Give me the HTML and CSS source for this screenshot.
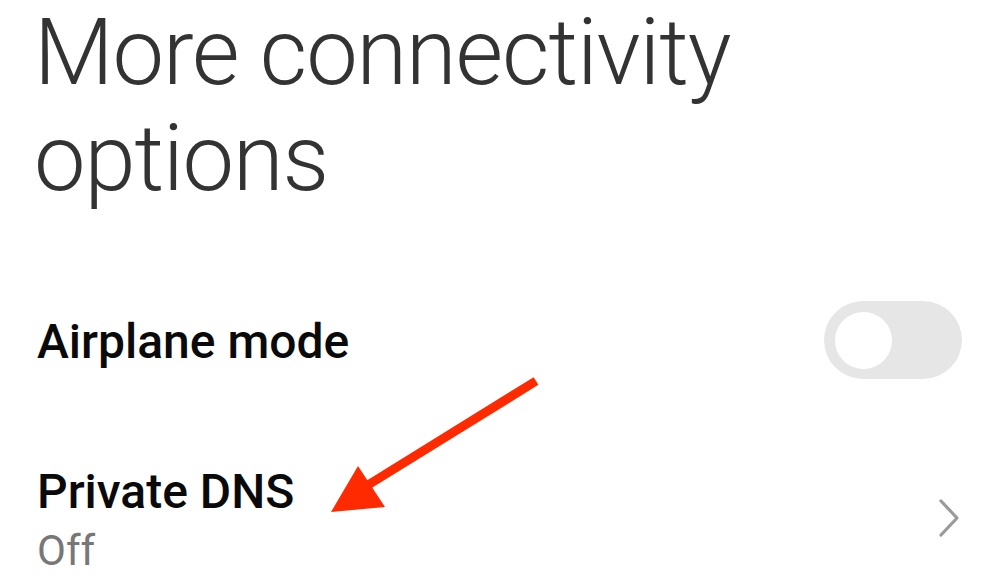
FILE: index.html
```html
<!DOCTYPE html>
<html>
<head>
<meta charset="utf-8">
<link rel="stylesheet" href="styles.css">
</head>
<body>
<div class="page">
  <h1 class="title">More connectivity<br>options</h1>
  <div class="row row-airplane">
    <div class="label">Airplane mode</div>
    <div class="toggle"><div class="knob"></div></div>
  </div>
  <div class="row row-dns">
    <div class="texts">
      <div class="label">Private DNS</div>
      <div class="sub">Off</div>
    </div>
    <svg class="chevron" width="24" height="40" viewBox="0 0 24 40">
      <path d="M4 3 L20 20 L4 37" fill="none" stroke="#9a9a9a" stroke-width="3.2" stroke-linecap="round" stroke-linejoin="round"/>
    </svg>
  </div>
  <svg class="arrow" width="1005" height="588" viewBox="0 0 1005 588">
    <line x1="536" y1="381" x2="368" y2="485" stroke="#ff2a00" stroke-width="9"/>
    <polygon points="358,466 385,507 331,512" fill="#ff2a00"/>
  </svg>
</div>
</body>
</html>
```
FILE: styles.css
```css
html, body {
  margin: 0;
  padding: 0;
  background: #ffffff;
}
.page {
  position: relative;
  width: 1005px;
  height: 588px;
  overflow: hidden;
  font-family: Roboto, "Liberation Sans", sans-serif;
  padding-left: 37px;
  padding-right: 43px;
  box-sizing: border-box;
}
.title {
  margin: 0 0 0 -3px;
  font-size: 92px;
  font-weight: 300;
  line-height: 106px;
  color: #333333;
  letter-spacing: -1.1px;
}
.row {
  display: flex;
  align-items: center;
  justify-content: space-between;
}
.row-airplane {
  margin-top: 89px;
  height: 78px;
}
.label {
  font-size: 48px;
  font-weight: 500;
  color: #0a0a0a;
  line-height: 56px;
}
.row-airplane .label {
  padding-top: 4px;
}
.toggle {
  width: 138px;
  height: 78px;
  border-radius: 39px;
  background: #e6e6e6;
  display: flex;
  align-items: center;
  padding-left: 11px;
  box-sizing: border-box;
}
.knob {
  width: 57px;
  height: 57px;
  border-radius: 50%;
  background: #ffffff;
}
.row-dns {
  margin-top: 85px;
}
.sub {
  margin-top: 6px;
  font-size: 42px;
  line-height: 50px;
  color: #777777;
  font-weight: 400;
}
.chevron {
  margin-right: 1px;
  margin-top: -4px;
}
.arrow {
  position: absolute;
  left: 0;
  top: 0;
}
```
